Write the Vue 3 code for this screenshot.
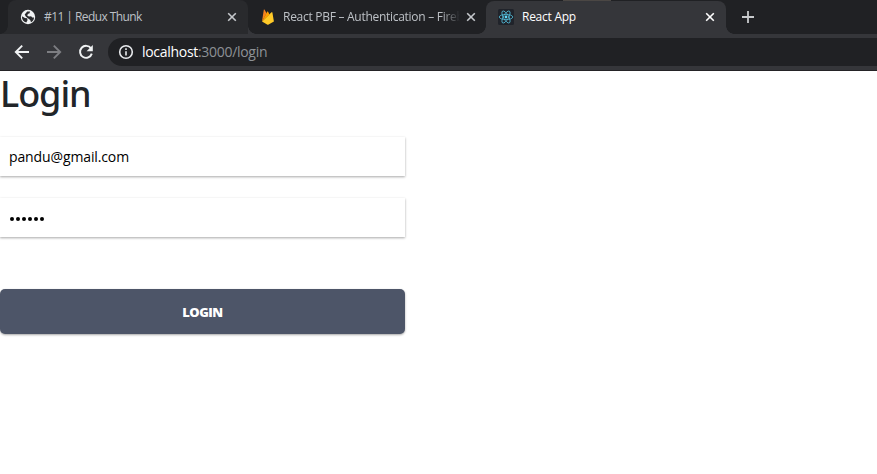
<script setup>
const tabs = [
  { id: 'redux', title: '#11 | Redux Thunk', icon: 'globe' },
  { id: 'firebase', title: 'React PBF – Authentication – Fireb', icon: 'fire' },
  { id: 'react', title: 'React App', icon: 'react' },
]
</script>

<template>
  <div class="window">
    <header class="tabstrip">
      <div v-for="t in tabs" :key="t.id" class="tab" :class="t.id">
        <svg v-if="t.icon === 'globe'" class="fav" viewBox="0 0 16 16">
          <circle cx="8" cy="8" r="7.2" fill="#f1f3f4" />
          <path d="M1.9 7.2 5 9l2.2.2.3 2.1-1.2 2.3C3.6 13 1.8 10.6 1.9 7.2ZM7.2 2.5 10 2.6 9.6 4.3 7.8 5 7.3 6.7 9 7.4l2.1-.2 1.1 1.4 1.9-.2C13.8 10.8 12.7 12.4 11 13.3L10.2 11 8.2 9.6 5.8 7.6 4.7 5.6Z" fill="#292a2d" />
        </svg>
        <svg v-else-if="t.icon === 'fire'" class="fav" viewBox="0 0 16 16">
          <path d="M2 12.5 3.8.8c.1-.4.6-.5.8-.1l2 3.5Z" fill="#f58220" />
          <path d="m2 12.5 9.5-9.2c.4-.3.8-.2.9.3l1.5 8.8-5.3 3c-.5.3-1 .3-1.5 0Z" fill="#ffca28" />
          <path d="m2 12.5 5.2-9.7c.2-.4.7-.4.9 0l1.4 2.6Z" fill="#ffa000" />
        </svg>
        <svg v-else class="fav" viewBox="0 0 16 16">
          <rect width="16" height="16" rx="1.5" fill="#20232a" />
          <g fill="none" stroke="#4fb3cf" stroke-width=".85">
            <ellipse cx="8" cy="8" rx="6.8" ry="2.6" />
            <ellipse cx="8" cy="8" rx="6.8" ry="2.6" transform="rotate(60 8 8)" />
            <ellipse cx="8" cy="8" rx="6.8" ry="2.6" transform="rotate(120 8 8)" />
          </g>
          <circle cx="8" cy="8" r="1.4" fill="#61dafb" />
        </svg>
        <span class="title">{{ t.title }}</span>
        <svg class="close" viewBox="0 0 10 10"><path d="m1.2 1.2 7.6 7.6M8.8 1.2 1.2 8.8" /></svg>
      </div>
      <svg class="plus" viewBox="0 0 12 12"><path d="M6 0v12M0 6h12" /></svg>
      <i class="edge"></i>
    </header>

    <nav class="toolbar">
      <svg class="nav" viewBox="0 0 16 16"><path d="M15 8H2.2M8.2 1.6 1.8 8l6.4 6.4" /></svg>
      <svg class="nav off" viewBox="0 0 16 16"><path d="M1 8h12.8M7.8 1.6 14.2 8l-6.4 6.4" /></svg>
      <svg class="nav" viewBox="0 0 16 16">
        <path d="M13 4.4A6 6 0 1 0 13.8 9.6" />
        <path d="M14.8 1v6.2H8.6Z" class="solid" />
      </svg>
      <div class="omnibox">
        <svg class="info" viewBox="0 0 16 16">
          <circle cx="8" cy="8" r="6.3" />
          <path d="M8 7.2v4.3M8 4.3v1.7" />
        </svg>
        <span class="url"><b>localhost</b>:3000/login</span>
      </div>
    </nav>

    <main class="page">
      <h1>Login</h1>
      <form @submit.prevent>
        <div class="field"><span class="email">pandu@gmail.com</span></div>
        <div class="field"><span class="dots"><i v-for="n in 6" :key="n"></i></span></div>
        <button type="submit"><span>LOGIN</span></button>
      </form>
    </main>
  </div>
</template>

<style>
body { margin: 0; background: #fff; }
</style>

<style scoped>
* { box-sizing: border-box; }
.window { width: 877px; height: 474px; overflow: hidden; background: #fff; font-family: "Open Sans", "Noto Sans", sans-serif; }
.tabstrip { position: relative; display: flex; height: 34px; padding-left: 8px; background: #202124; }
.edge { position: absolute; left: 563px; top: 0; width: 48px; height: 1px; background: #4b4744; }
.tab { position: relative; display: flex; align-items: center; height: 34px; padding-left: 12px; color: #bdc1c6; flex: none; }
.redux { width: 240px; background: #292a2d; border-radius: 8px 8px 0 0; }
.redux::before, .react::before, .react::after { content: ""; position: absolute; bottom: 0; width: 8px; height: 8px; }
.redux::before { left: -8px; background: radial-gradient(circle at 0 0, transparent 7.5px, #292a2d 8px); }
.redux::after { content: ""; position: absolute; left: 240px; bottom: 0; width: 8px; height: 8px; background: radial-gradient(circle at 100% 0, transparent 7.5px, #35363a 8px); }
.firebase { width: 238px; }
.react { width: 240px; margin-top: 1px; height: 33px; background: #35363a; border-radius: 8px 8px 0 0; color: #fff; }
.react::before { left: -8px; background: radial-gradient(circle at 0 0, transparent 7.5px, #35363a 8px); }
.react::after { right: -8px; background: radial-gradient(circle at 100% 0, transparent 7.5px, #35363a 8px); }
.fav { width: 16px; height: 16px; flex: none; }
.title { width: 176px; margin-left: 8px; font-size: 12px; line-height: 18px; letter-spacing: -0.26px; white-space: nowrap; }
.redux .title { letter-spacing: -0.57px; }
.react .title, .react .fav, .react .close { margin-top: -1px; }
.firebase .title { margin-left: 7px; width: 177px; margin-right: -1px; letter-spacing: -0.28px; -webkit-mask-image: linear-gradient(90deg, #000 158px, transparent 177px); mask-image: linear-gradient(90deg, #000 158px, transparent 177px); }
.close { width: 10px; height: 10px; margin-left: 7px; flex: none; fill: none; stroke: #c5c8cc; stroke-width: 1.6; }
.react .close { stroke: #fff; }
.plus { width: 12px; height: 12px; margin: 11px 0 0 16px; fill: none; stroke: #c8cacd; stroke-width: 1.8; }
.toolbar { display: flex; align-items: center; height: 37px; padding: 0 0 1px 14px; background: #35363a; border-bottom: 1px solid #242326; }
.nav { width: 16px; height: 16px; margin-right: 16px; fill: none; stroke: #f1f3f4; stroke-width: 1.9; }
.off { stroke: #7d7e82; }
.solid { fill: #f1f3f4; stroke: none; }
.omnibox { display: flex; align-items: center; flex: 1; height: 28px; margin-left: -2px; padding-left: 10px; background: #202124; border-radius: 14px 0 0 14px; }
.info { width: 16px; height: 16px; fill: none; stroke: #e8eaed; stroke-width: 1.6; }
.url { margin-left: 8px; font-size: 14px; line-height: 20px; letter-spacing: -0.3px; color: #8d9196; }
.url b { font-weight: 400; color: #fff; }
.page { width: 405px; }
h1 { margin: 0; height: 66px; font-size: 36px; line-height: 46px; letter-spacing: -1.05px; font-weight: 500; font-family: "Noto Sans", "Open Sans", sans-serif; color: #212529; }
form { display: flex; flex-direction: column; }
.field { display: flex; align-items: center; height: 39px; margin-bottom: 22px; padding-left: 9px; background: #fff; box-shadow: 0 1px 3px rgba(0, 0, 0, .12), 0 1px 2px rgba(0, 0, 0, .24); }
.email { font-size: 14px; line-height: 20px; letter-spacing: -0.12px; color: #000; }
.dots { display: flex; gap: 2px; padding: 2px 0 0 1px; }
.dots i { width: 4px; height: 4px; border-radius: 50%; background: #000; }
button { display: block; width: 405px; height: 45px; margin: 30px 0 0; padding: 0; border: 0; border-radius: 5px; background: #4d5568; color: #fff; font: 800 13px/18px "Open Sans", sans-serif; letter-spacing: -0.5px; box-shadow: 0 1px 3px rgba(0, 0, 0, .12), 0 1px 2px rgba(0, 0, 0, .24); }
</style>
